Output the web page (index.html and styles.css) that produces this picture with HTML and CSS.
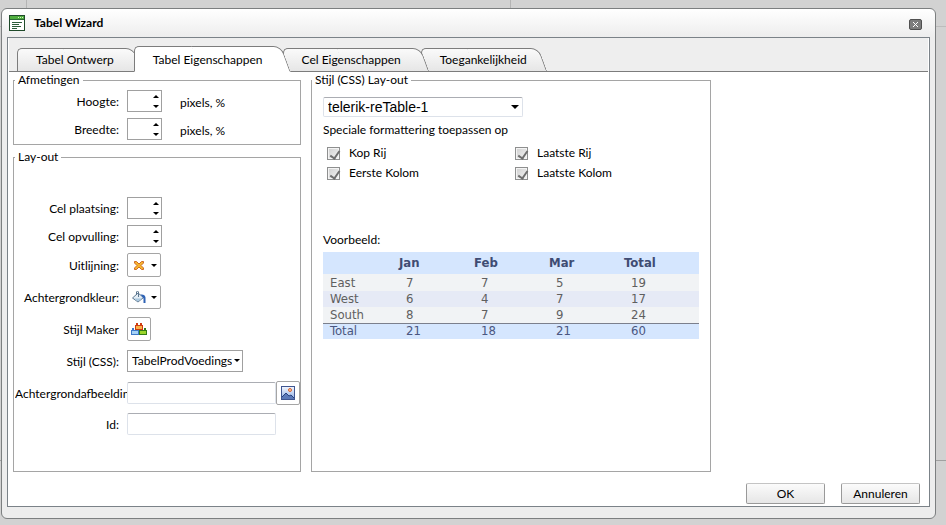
FILE: index.html
```html
<!DOCTYPE html>
<html lang="nl">
<head>
    <meta charset="UTF-8">
    <meta name="viewport" content="width=device-width, initial-scale=1.0">
    <title>Tabel Wizard</title>
    <link rel="stylesheet" href="styles.css">
</head>
<body>

    <div class="dialog">
        <div class="titlebar">
            <svg class="title-icon" width="16" height="16" viewBox="0 0 16 16">
                <rect x="0.5" y="0.5" width="15" height="15" fill="#fff" stroke="#1f4a2a"/>
                <rect x="1" y="1" width="14" height="3" fill="#4fae3e"/>
                <path d="M1 4.500h14" stroke="#2b6a35"/>
                <path d="M9 2.500h1M11 2.500h1M13 2.500h1" stroke="#d8f5c8"/>
                <path d="M3 7.500h10M3 9.500h7M3 11.500h9M3 13.500h5" stroke="#2d5c3a"/>
            </svg>
            <h1>Tabel Wizard</h1>
            <button class="close-button" aria-label="Sluiten">
                <svg width="5" height="5" viewBox="0 0 5 5"><path d="M0 0l5 5M5 0L0 5" stroke="#fff"/></svg>
            </button>
        </div>

        <div class="frame">
            <nav class="tabs">
                <a href="#" class="tab"><span>Tabel Ontwerp</span></a>
                <a href="#" class="tab active"><span>Tabel Eigenschappen</span></a>
                <a href="#" class="tab"><span>Cel Eigenschappen</span></a>
                <a href="#" class="tab"><span>Toegankelijkheid</span></a>
            </nav>

            <div class="panels">
                <div class="left">
                    <fieldset class="sizes">
                        <legend>Afmetingen</legend>
                        <div class="row">
                            <label for="hoogte">Hoogte:</label>
                            <div class="spin"><input type="text" id="hoogte"><div class="arrows"><button class="up" aria-label="Hoger"></button><button class="down" aria-label="Lager"></button></div></div>
                            <span class="unit">pixels, %</span>
                        </div>
                        <div class="row">
                            <label for="breedte">Breedte:</label>
                            <div class="spin"><input type="text" id="breedte"><div class="arrows"><button class="up" aria-label="Hoger"></button><button class="down" aria-label="Lager"></button></div></div>
                            <span class="unit">pixels, %</span>
                        </div>
                    </fieldset>

                    <fieldset class="layout">
                        <legend>Lay-out</legend>
                        <div class="row">
                            <label for="plaatsing">Cel plaatsing:</label>
                            <div class="spin"><input type="text" id="plaatsing"><div class="arrows"><button class="up" aria-label="Hoger"></button><button class="down" aria-label="Lager"></button></div></div>
                        </div>
                        <div class="row">
                            <label for="opvulling">Cel opvulling:</label>
                            <div class="spin"><input type="text" id="opvulling"><div class="arrows"><button class="up" aria-label="Hoger"></button><button class="down" aria-label="Lager"></button></div></div>
                        </div>
                        <div class="row tool">
                            <label for="uitlijning">Uitlijning:</label>
                            <button class="tool-button split" id="uitlijning">
                                <svg width="16" height="16" viewBox="0 0 16 16">
                                    <path d="M3.500 4.500h2L8 7l2.500-2.500h2V6L10 8.500l2.500 2.500v1.500h-2L8 10l-2.500 2.500h-2V11L6 8.500 3.500 6z" fill="#f5b52e" stroke="#cf6a28"/>
                                </svg>
                                <i class="caret"></i>
                            </button>
                        </div>
                        <div class="row tool">
                            <label for="kleur">Achtergrondkleur:</label>
                            <button class="tool-button split" id="kleur">
                                <svg width="16" height="16" viewBox="0 0 16 16">
                                    <path d="M1.500 9L7 4l5.500 4.500L7 13z" fill="#e3edf5" stroke="#5d7790"/>
                                    <path d="M3 9.500h8L7 12.500z" fill="#a9c8df"/>
                                    <path d="M5.500 6V3q1-2 2 0v5" fill="none" stroke="#5d7790"/>
                                    <path d="M9.500 5.500q4.500-.5 5 3V14h-2V9.500z" fill="#2f63b5"/>
                                </svg>
                                <i class="caret"></i>
                            </button>
                        </div>
                        <div class="row tool">
                            <label for="maker">Stijl Maker</label>
                            <button class="tool-button" id="maker">
                                <svg width="16" height="14" viewBox="0 0 16 14">
                                    <path d="M1 6h2v2H1zM5 6h1v2H5z" fill="#3d78c8"/>
                                    <rect x="0.5" y="8.500" width="7" height="4" fill="#a5d2f6" stroke="#3d78c8"/>
                                    <path d="M10 6h1v2h-1zM13 6h2v2h-2z" fill="#337c16"/>
                                    <rect x="8.500" y="8.500" width="7" height="4" fill="#9bd52b" stroke="#337c16"/>
                                    <path d="M5 1h2v2H5zM9 1h2v2H9z" fill="#cf3d12"/>
                                    <rect x="4.500" y="3.500" width="7" height="4" fill="#f9b24a" stroke="#cf3d12"/>
                                </svg>
                            </button>
                        </div>
                        <div class="row tool">
                            <label for="stijl">Stijl (CSS):</label>
                            <div class="select css-select">
                                <select id="stijl"><option>TabelProdVoedings</option></select>
                            </div>
                        </div>
                        <div class="row tool">
                            <label for="afbeelding">Achtergrondafbeelding:</label>
                            <input type="text" class="text-box" id="afbeelding">
                            <button class="tool-button" aria-label="Afbeelding kiezen">
                                <svg width="14" height="14" viewBox="0 0 14 14">
                                    <defs><linearGradient id="sky" x1="0" y1="0" x2="0" y2="1"><stop offset="0" stop-color="#f4f8ff"/><stop offset="1" stop-color="#8aa9e2"/></linearGradient></defs>
                                    <rect x="0.5" y="0.5" width="13" height="13" fill="url(#sky)" stroke="#3f5590"/>
                                    <path d="M1 11l4-4 3 3 2-1 3 3v1H1z" fill="#5a78b8"/>
                                    <path d="M1 11l4-4 3 3 2-1 3 3" fill="none" stroke="#27417f"/>
                                    <circle cx="9" cy="4" r="1.500" fill="#fbd0a0" stroke="#d8602e"/>
                                </svg>
                            </button>
                        </div>
                        <div class="row">
                            <label for="id">Id:</label>
                            <input type="text" class="text-box" id="id">
                        </div>
                    </fieldset>
                </div>

                <fieldset class="style">
                    <legend>Stijl (CSS) Lay-out</legend>
                    <div class="select theme-select">
                        <select aria-label="Stijl"><option>telerik-reTable-1</option></select>
                    </div>
                    <p class="hint">Speciale formattering toepassen op</p>
                    <div class="checks">
                        <label><input type="checkbox" checked disabled>Kop Rij</label>
                        <label><input type="checkbox" checked disabled>Laatste Rij</label>
                        <label><input type="checkbox" checked disabled>Eerste Kolom</label>
                        <label><input type="checkbox" checked disabled>Laatste Kolom</label>
                    </div>
                    <p class="preview-title">Voorbeeld:</p>
                    <table class="preview">
                        <thead>
                            <tr><th></th><th>Jan</th><th>Feb</th><th>Mar</th><th>Total</th></tr>
                        </thead>
                        <tbody>
                            <tr><td>East</td><td>7</td><td>7</td><td>5</td><td>19</td></tr>
                            <tr><td>West</td><td>6</td><td>4</td><td>7</td><td>17</td></tr>
                            <tr><td>South</td><td>8</td><td>7</td><td>9</td><td>24</td></tr>
                        </tbody>
                        <tfoot>
                            <tr><td>Total</td><td>21</td><td>18</td><td>21</td><td>60</td></tr>
                        </tfoot>
                    </table>
                </fieldset>
            </div>

            <div class="footer">
                <button class="dialog-button">OK</button>
                <button class="dialog-button">Annuleren</button>
            </div>
        </div>
    </div>

</body>
</html>
```
FILE: styles.css
```css
* {
    box-sizing: border-box;
}

body {
    font-family: 'Segoe UI', Lato, sans-serif;
    font-size: 12px;
    line-height: 16px;
    color: #000;
    margin: 0;
    min-height: 100vh;
    padding: 8px 10px 6px 1px;
    display: flex;
    background:
        linear-gradient(#b4b4b4, #b4b4b4) 26px 0 / 1px 8px no-repeat,
        linear-gradient(#b4b4b4, #b4b4b4) 510px 0 / 1px 8px no-repeat,
        linear-gradient(#a0a0a0, #a0a0a0) 0 460px / 100% 1px no-repeat,
        linear-gradient(#bcbcbc, #bcbcbc) 0 26px / 100% 1px no-repeat,
        #d2d2d2;
}

button, input, select {
    font: inherit;
    color: inherit;
    margin: 0;
    padding: 0;
}

.dialog {
    flex: 1;
    display: flex;
    flex-direction: column;
    padding: 0 5px;
    border: 1px solid #7c7f80;
    border-radius: 6px;
    background: linear-gradient(#fff, #ededed 28px);
}

.titlebar {
    height: 28px;
    padding: 0 8px 0 2px;
    display: flex;
    align-items: center;
    gap: 9px;
}

.titlebar h1 {
    flex: 1;
    margin: 0;
    font-size: 12px;
    font-weight: 700;
}

.close-button {
    width: 13px;
    height: 11px;
    margin-top: 2px;
    display: flex;
    align-items: center;
    justify-content: center;
    border: 1px solid #505050;
    border-radius: 2px;
    background: #7d7d7d;
}

.frame {
    flex: 1;
    display: flex;
    flex-direction: column;
    margin-bottom: 11px;
    border: 1px solid #7b8288;
    background: #fff;
}

/* Tabs */
.tabs {
    height: 34px;
    margin: 0 1px;
    padding-left: 8px;
    display: flex;
    align-items: flex-end;
    background: #eee;
    box-shadow: inset 0 -1px #7c7c7c;
}

.tab {
    position: relative;
    height: 24px;
    padding: 4px 28px 0 19px;
    margin-right: -8px;
    color: #000;
    text-decoration: none;
    white-space: nowrap;
}

.tab span {
    position: relative;
    z-index: 1;
}

.tab:nth-child(1), .tab:nth-child(3) {
    z-index: 2;
}

.tab:nth-child(4) {
    z-index: 1;
    padding-right: 20px;
}

.tab.active {
    z-index: 3;
    height: 26px;
    padding-top: 6px;
}

/* the left half is upright, the right half leans over the next tab */
.tab::before, .tab::after {
    content: "";
    position: absolute;
    top: 0;
    bottom: 0;
    border: 1px solid #7c7c7c;
    background: linear-gradient(#fafafa, #e6e6e6);
}

.tab::before {
    left: 0;
    right: 50%;
    border-right: none;
    border-radius: 5px 0 0 0;
}

.tab::after {
    left: 40%;
    right: 4px;
    border-left: none;
    border-radius: 0 8px 0 0;
    transform: skewX(20deg);
}

.tab.active::before, .tab.active::after {
    background: #fff;
    border-bottom-color: #fff;
}

/* Panels */
.panels {
    display: flex;
    gap: 10px;
    padding: 0 5px;
}

.left {
    width: 288px;
    display: flex;
    flex-direction: column;
    gap: 4px;
}

fieldset {
    min-width: 0;
    margin: 0;
    border: 1px solid #a5a5a5;
}

legend {
    padding: 0 3px;
}

.sizes, .layout {
    padding: 2px 0 4px 1px;
}

.layout {
    padding-top: 32px;
    padding-bottom: 36px;
}

.row {
    height: 22px;
    margin-bottom: 6px;
    display: flex;
    align-items: center;
}

.row:last-child {
    margin-bottom: 0;
}

.row.tool {
    height: 24px;
    margin-bottom: 8px;
}

.row > label {
    width: 112px;
    flex: none;
    padding: 2px 8px 0 0;
    overflow: hidden;
    text-align: right;
    white-space: nowrap;
}

.spin {
    width: 35px;
    height: 22px;
    display: flex;
    border: 1px solid #a0a0a0;
    background: #fff;
}

.spin input {
    flex: 1;
    min-width: 0;
    border: none;
    outline: none;
}

.arrows {
    width: 11px;
    display: flex;
    flex-direction: column;
}

.arrows button {
    flex: 1;
    display: flex;
    align-items: center;
    justify-content: center;
    border: none;
    background: none;
}

.up::before, .down::before, .caret, .select::after {
    content: "";
    border: 3px solid transparent;
}

.up::before {
    border-top: none;
    border-bottom-color: #000;
}

.down::before, .caret, .select::after {
    border-bottom: none;
    border-top-color: #000;
}

.unit {
    margin-left: 18px;
    padding-top: 4px;
}

.tool-button {
    width: 24px;
    height: 24px;
    display: flex;
    align-items: center;
    justify-content: center;
    border: 1px solid #a5a5a5;
    border-radius: 2px;
    background: #fff;
}

.tool-button.split {
    width: 34px;
    gap: 4px;
}

.text-box {
    width: 149px;
    height: 22px;
    border: 1px solid #dde2ea;
    border-top-color: #abadb3;
    border-radius: 2px;
    background: #fff;
}

.select {
    position: relative;
    background: #fff;
}

.select::after {
    position: absolute;
    right: 3px;
    top: 50%;
    margin-top: -2px;
    pointer-events: none;
}

.select select {
    width: 100%;
    height: 100%;
    appearance: none;
    border: 1px solid #a0a0a0;
    background: none;
}

.css-select {
    width: 116px;
    height: 22px;
}

.css-select select {
    padding: 0 10px 0 4px;
}

/* CSS layout */
.style {
    width: 400px;
    padding: 9px 11px 0;
}

.style legend {
    margin-left: -11px;
}

.theme-select {
    width: 200px;
    height: 20px;
}

.theme-select::after {
    right: 4px;
    border-width: 4px 4px 0;
}

.theme-select select {
    padding: 0 16px 0 4px;
    font-family: 'Liberation Sans', Arial, sans-serif;
    font-size: 14px;
    border-color: #abadb3 #dde2ea #dde2ea;
    border-radius: 2px;
}

.hint {
    margin: 5px 0 7px;
}

.checks {
    display: grid;
    grid-template-columns: 188px 1fr;
    row-gap: 4px;
    padding-left: 4px;
}

.checks label {
    display: flex;
    align-items: center;
    gap: 9px;
}

.checks input {
    position: relative;
    width: 13px;
    height: 13px;
    appearance: none;
    border: 1px solid #8e8f8f;
    background: linear-gradient(135deg, #cfcfcf, #f4f4f4);
    box-shadow: inset 0 0 0 1px #f4f4f4;
}

.checks input::before {
    content: "";
    position: absolute;
    left: 4px;
    top: 1px;
    width: 4px;
    height: 8px;
    border: solid #6e6e6e;
    border-width: 0 2px 2px 0;
    transform: rotate(35deg);
}

.preview-title {
    margin: 51px 0 4px;
}

.preview {
    width: 100%;
    table-layout: fixed;
    border-collapse: collapse;
    font-family: Tahoma, 'DejaVu Sans Condensed', 'DejaVu Sans', sans-serif;
    font-size: 13px;
    color: #5f5f5f;
    text-align: left;
}

.preview th {
    height: 22px;
    width: 75px;
    padding: 0 0 0 7px;
    color: #3f4c73;
    background: #d5e6fe;
}

.preview th:first-child {
    width: 69px;
}

.preview th:last-child {
    width: auto;
}

.preview td {
    height: 16px;
    padding: 0 0 0 14px;
    background: #f1f3f5;
}

.preview td:first-child {
    padding-left: 7px;
}

.preview tbody tr:first-child td {
    height: 17px;
}

.preview tbody tr:nth-child(2) td {
    background: #e6eaf6;
}

.preview tfoot td {
    height: 15px;
    border-top: 1px solid #7b7f8c;
    color: #4a5680;
    background: #d5e6fe;
    line-height: 14px;
}

.footer {
    margin-top: auto;
    padding: 0 9px 2px;
    display: flex;
    justify-content: flex-end;
    gap: 16px;
}

.dialog-button {
    width: 79px;
    height: 21px;
    border: 1px solid #999;
    border-top-color: #c4c4c4;
    border-radius: 2px;
    background: linear-gradient(#fbfbfb, #e6e6e6);
}
```
